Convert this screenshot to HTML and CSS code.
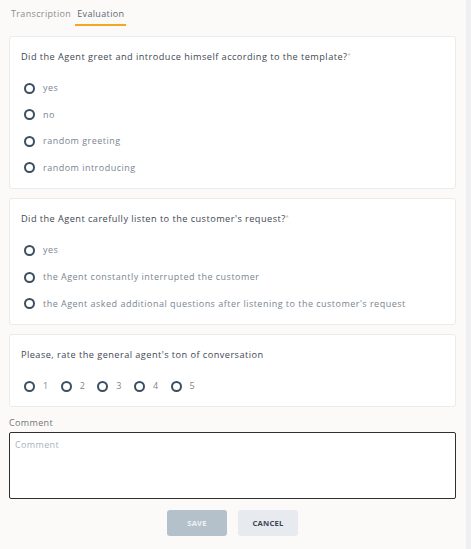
FILE: index.html
```html
<!DOCTYPE html>
<html>
<head>
<meta charset="utf-8">
<link rel="stylesheet" href="styles.css">
</head>
<body>
<div class="page">
  <main class="main">
    <nav class="tabs">
      <span class="tab">Transcription</span>
      <span class="tab active">Evaluation</span>
    </nav>

    <section class="card">
      <p class="question">Did the Agent greet and introduce himself according to the template?<sup class="req">*</sup></p>
      <div class="options">
        <label class="option"><span class="radio"></span><span class="opt-text">yes</span></label>
        <label class="option"><span class="radio"></span><span class="opt-text">no</span></label>
        <label class="option"><span class="radio"></span><span class="opt-text">random greeting</span></label>
        <label class="option"><span class="radio"></span><span class="opt-text">random introducing</span></label>
      </div>
    </section>

    <section class="card">
      <p class="question">Did the Agent carefully listen to the customer's request?<sup class="req">*</sup></p>
      <div class="options">
        <label class="option"><span class="radio"></span><span class="opt-text">yes</span></label>
        <label class="option"><span class="radio"></span><span class="opt-text">the Agent constantly interrupted the customer</span></label>
        <label class="option"><span class="radio"></span><span class="opt-text">the Agent asked additional questions after listening to the customer's request</span></label>
      </div>
    </section>

    <section class="card">
      <p class="question">Please, rate the general agent's ton of conversation</p>
      <div class="options inline">
        <label class="option"><span class="radio"></span><span class="opt-text">1</span></label>
        <label class="option"><span class="radio"></span><span class="opt-text">2</span></label>
        <label class="option"><span class="radio"></span><span class="opt-text">3</span></label>
        <label class="option"><span class="radio"></span><span class="opt-text">4</span></label>
        <label class="option"><span class="radio"></span><span class="opt-text">5</span></label>
      </div>
    </section>

    <div class="comment">
      <div class="comment-label">Comment</div>
      <div class="textarea"><span class="placeholder">Comment</span></div>
    </div>

    <div class="actions">
      <button class="btn save">SAVE</button>
      <button class="btn cancel">CANCEL</button>
    </div>
  </main>
  <div class="scrollbar"></div>
</div>
</body>
</html>
```

FILE: styles.css
```css
* { box-sizing: border-box; }
html, body { margin: 0; padding: 0; }
body {
  background: #fbfaf8;
  font-family: "Open Sans", "DejaVu Sans", sans-serif;
  color: #3f4550;
}
.page {
  display: flex;
  width: 471px;
  height: 549px;
  overflow: hidden;
}
.main {
  flex: 1;
  padding: 0 10px 0 9px;
}
.scrollbar {
  width: 5px;
  background: #efeff3;
}
.tabs {
  display: flex;
  gap: 2px;
  height: 26px;
  padding-top: 8px;
  margin-bottom: 10px;
}
.tab {
  font-size: 9px;
  letter-spacing: 0.35px;
  line-height: 12px;
  color: #8d8d8d;
  padding: 0 2px;
  height: 18px;
}
.active {
  color: #5b6670;
  border-bottom: 2px solid #f5a623;
}
.card {
  background: #ffffff;
  border: 1px solid #ebebeb;
  border-radius: 3px;
  padding: 13px 11px 13px 11px;
  margin-bottom: 9.5px;
}
.question {
  margin: 0;
  font-size: 9.2px;
  letter-spacing: 0.45px;
  line-height: 14px;
  color: #414853;
}
.req {
  color: #e8a07a;
  font-size: 6px;
  vertical-align: top;
  line-height: 10px;
  letter-spacing: 0;
}
.options {
  margin-top: 17px;
  display: flex;
  flex-direction: column;
  gap: 12.67px;
}
.options.inline {
  flex-direction: row;
  gap: 9px;
}
.option {
  display: flex;
  align-items: center;
  height: 14px;
  gap: 8px;
  padding-left: 3px;
}
.radio {
  width: 11px;
  height: 11px;
  border: 2px solid #3a4f63;
  border-radius: 50%;
  flex: none;
}
.opt-text {
  font-size: 9px;
  letter-spacing: 0.48px;
  color: #7a8591;
  line-height: 12px;
}
.comment-label {
  font-size: 9px;
  letter-spacing: 0.35px;
  line-height: 12px;
  color: #757575;
  margin-top: 10px;
  margin-bottom: 3px;
}
.textarea {
  height: 67px;
  border: 1px solid #2f2f2f;
  border-radius: 2px;
  background: #fff;
  padding: 6px 5px;
  font-size: 9px;
  line-height: 12px;
}
.placeholder {
  font-size: 9px;
  letter-spacing: 0.35px;
  line-height: 12px;
  color: #a9b3bc;
}
.actions {
  display: flex;
  justify-content: center;
  gap: 11px;
  margin-top: 11px;
}
.btn {
  width: 60px;
  height: 26px;
  border: none;
  border-radius: 3px;
  font-family: "Open Sans", "DejaVu Sans", sans-serif;
  font-size: 7.6px;
  letter-spacing: 0.2px;
  font-weight: 700;
  padding: 0;
}
.save {
  background: #b5c1ca;
  color: #eef2f5;
}
.cancel {
  background: #e7ebef;
  color: #3d4752;
}
```
